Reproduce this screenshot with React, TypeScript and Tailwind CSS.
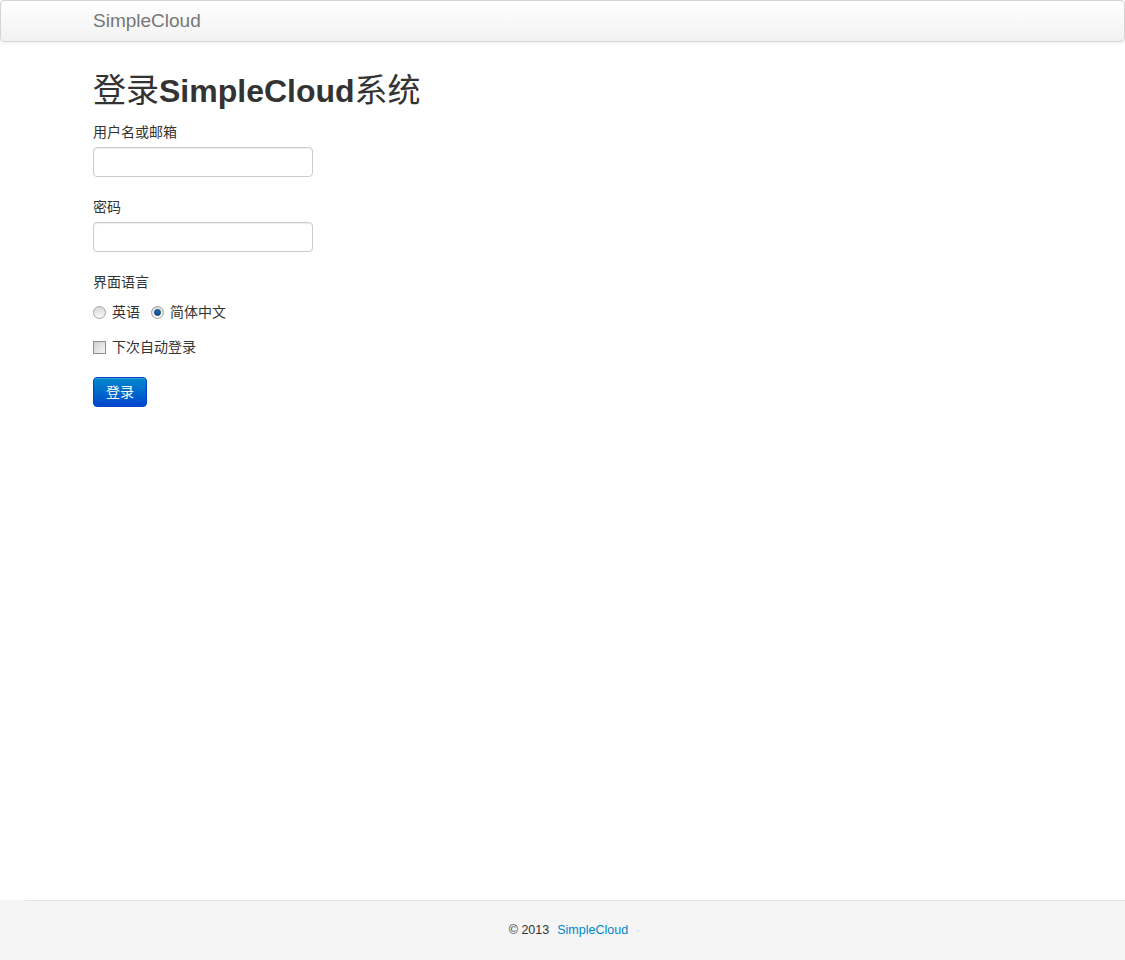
import React from 'react';

const font = { fontFamily: '"Liberation Sans", "Noto Sans CJK SC", sans-serif' };

function Radio({ checked }: { checked?: boolean }) {
    return (
        <span className="inline-flex h-[13px] w-[13px] items-center justify-center rounded-full border border-[#a3a3a3] bg-gradient-to-b from-[#d9d9d9] to-[#f7f7f7]">
            {checked && <span className="h-[7px] w-[7px] rounded-full border border-[#0b3f6e] bg-gradient-to-b from-[#1a73c6] to-[#0a4d8a]" />}
        </span>
    );
}

function Checkbox() {
    return (
        <span className="inline-block h-[13px] w-[13px] border border-[#8f8f8f] bg-gradient-to-br from-[#d0d0d0] to-[#f5f5f5]" />
    );
}

export default function App() {
    return (
        <div className="flex min-h-screen flex-col bg-white text-[#333]" style={font}>
            <div className="h-[42px] rounded-[4px] border border-[#d4d4d4] bg-gradient-to-b from-white to-[#f2f2f2] shadow-[0_1px_4px_rgba(0,0,0,0.065)]">
                <div className="pl-[92px] text-[19px] leading-[40px] text-[#777]">SimpleCloud</div>
            </div>

            <main className="flex-1 pl-[93px] pt-[29px]">
                <h1 className="mb-[11px] h-[40px] text-[32px] font-bold leading-[40px] text-[#333]">
                    <span className="text-[33px] font-normal">登录</span>SimpleCloud<span className="text-[33px] font-normal">系统</span>
                </h1>

                <form className="text-[14px]">
                    <label className="mb-[5px] block leading-[20px]">用户名或邮箱</label>
                    <input type="text" className="mb-[20px] block h-[30px] w-[220px] rounded-[4px] border border-[#ccc] px-[6px] shadow-[inset_0_1px_1px_rgba(0,0,0,0.075)] outline-none" />

                    <label className="mb-[5px] block leading-[20px]">密码</label>
                    <input type="password" className="mb-[20px] block h-[30px] w-[220px] rounded-[4px] border border-[#ccc] px-[6px] shadow-[inset_0_1px_1px_rgba(0,0,0,0.075)] outline-none" />

                    <label className="mb-[10px] block leading-[20px]">界面语言</label>
                    <div className="mb-[15px] flex h-[20px] items-center">
                        <Radio />
                        <span className="ml-[6px] mr-[11px]">英语</span>
                        <Radio checked />
                        <span className="ml-[6px]">简体中文</span>
                    </div>

                    <div className="mb-[20px] flex h-[20px] items-center">
                        <Checkbox />
                        <span className="ml-[6px]">下次自动登录</span>
                    </div>

                    <button type="button" className="h-[30px] w-[54px] rounded-[4px] border border-[#0044cc] bg-gradient-to-b from-[#0088cc] to-[#0044cc] text-[14px] leading-[28px] text-white shadow-[inset_0_1px_0_rgba(255,255,255,0.2)]">
                        登录
                    </button>
                </form>
            </main>

            <footer className="h-[60px] bg-[#f5f5f5]">
                <div className="ml-[25px] h-px bg-[#e5e5e5]" />
                <div className="flex h-[59px] items-center justify-center pl-[24px] text-[12.5px]">
                    <span>© 2013</span>
                    <a className="ml-[8px] text-[#0088cc]">SimpleCloud</a>
                    <span className="ml-[8px] text-[#ccc]">·</span>
                </div>
            </footer>
        </div>
    );
}
